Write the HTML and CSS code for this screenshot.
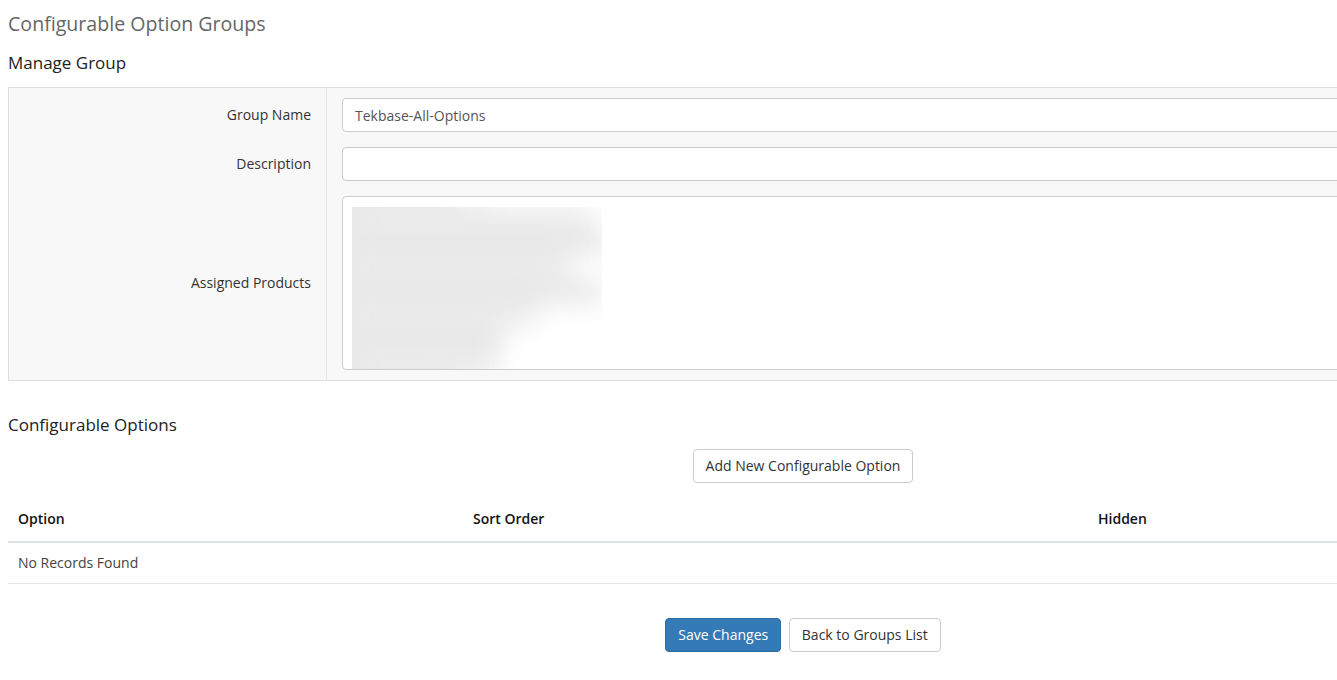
FILE: index.html
```html
<!DOCTYPE html>
<html lang="en">
<head>
  <meta charset="UTF-8" />
  <title>Configurable Option Groups</title>
  <link rel="stylesheet" href="styles.css">
</head>
<body>
  <div class="page">

    <h1 class="page-title">Configurable Option Groups</h1>

    <!-- Manage Group -->
    <h2 class="section-title">Manage Group</h2>
    <table class="form">
      <tr>
        <td class="fieldlabel">Group Name</td>
        <td class="fieldarea"><input type="text" class="form-control" value="Tekbase-All-Options" /></td>
      </tr>
      <tr>
        <td class="fieldlabel">Description</td>
        <td class="fieldarea"><input type="text" class="form-control" value="" /></td>
      </tr>
      <tr>
        <td class="fieldlabel">Assigned Products</td>
        <td class="fieldarea">
          <div class="multi-select">
            <div class="blur-clip">
              <div class="blur">
                <div class="bar" style="width: 240px"></div>
                <div class="bar" style="width: 255px"></div>
                <div class="bar" style="width: 215px"></div>
                <div class="bar" style="width: 250px"></div>
                <div class="bar" style="width: 185px"></div>
                <div class="bar" style="width: 150px"></div>
                <div class="bar" style="width: 140px"></div>
              </div>
            </div>
          </div>
        </td>
      </tr>
    </table>

    <!-- Configurable Options -->
    <h2 class="section-title options-title">Configurable Options</h2>
    <div class="center">
      <button type="button" class="btn">Add New Configurable Option</button>
    </div>

    <table class="datatable">
      <colgroup>
        <col style="width: 455px">
        <col style="width: 625px">
        <col>
      </colgroup>
      <thead>
        <tr>
          <th>Option</th>
          <th>Sort Order</th>
          <th>Hidden</th>
        </tr>
      </thead>
      <tbody>
        <tr>
          <td colspan="3">No Records Found</td>
        </tr>
      </tbody>
    </table>

    <div class="center actions">
      <button type="button" class="btn btn-primary">Save Changes</button>
      <button type="button" class="btn">Back to Groups List</button>
    </div>

  </div>
</body>
</html>
```

FILE: styles.css
```css
html, body {
  overflow: hidden;
}

body {
  margin: 0;
  font-family: "Open Sans", "Liberation Sans", sans-serif;
  font-size: 14px;
  line-height: 20px;
  color: #333;
  background: #fff;
}

.page {
  width: 1590px;
  padding: 0 8px;
}

.page-title {
  margin: 0;
  padding-top: 11px;
  font-size: 19.6px;
  font-weight: normal;
  line-height: 26px;
  color: #666;
}

.section-title {
  margin: 13px 0 11px;
  font-size: 17px;
  font-weight: normal;
  line-height: 26px;
  color: #222;
}

.options-title {
  margin-top: 31px;
  margin-bottom: 11px;
}

/* form table */
.form {
  width: 100%;
  border-collapse: collapse;
  border: 1px solid #ddd;
  background: #f8f8f8;
}

.form td {
  padding: 8px 15px 7px;
  vertical-align: middle;
}

.form tr:first-child td {
  padding-top: 10px;
}

.form tr:last-child td {
  padding-bottom: 10px;
}

.fieldlabel {
  width: 287px;
  text-align: right;
  color: #333;
  border-right: 1px solid #e6e6e6;
}

.form-control {
  display: block;
  box-sizing: border-box;
  width: 100%;
  height: 34px;
  padding: 6px 12px;
  font-family: inherit;
  font-size: 14px;
  color: #555;
  background: #fff;
  border: 1px solid #ccc;
  border-radius: 4px;
}

.multi-select {
  box-sizing: border-box;
  height: 174px;
  padding: 10px 0 0 9px;
  background: #fff;
  border: 1px solid #ccc;
  border-radius: 4px;
}

.blur-clip {
  width: 250px;
  height: 162px;
  overflow: hidden;
  background: linear-gradient(to right, #e7e7e7 0, #e9e9e9 90px, rgba(255,255,255,0) 160px);
}

.blur {
  margin: -30px 0 0 -30px;
  padding: 30px 0 30px 30px;
  display: flex;
  flex-direction: column;
  filter: blur(13px);
}

.bar {
  height: 24px;
  background: #e7e7e7;
}

.bar:nth-child(odd) {
  background: #ececec;
}

/* buttons */
.center {
  text-align: center;
}

.btn {
  display: inline-block;
  height: 34px;
  padding: 6px 12px;
  font-family: inherit;
  font-size: 14px;
  line-height: 20px;
  color: #333;
  background: #fff;
  border: 1px solid #ccc;
  border-radius: 4px;
}

.btn-primary {
  color: #fff;
  background: #337ab7;
  border-color: #2e6da4;
}

.actions {
  margin-top: 34px;
}

.actions .btn {
  margin: 0 2px;
}

/* data table */
.datatable {
  width: 100%;
  margin-top: 16px;
  border-collapse: collapse;
  table-layout: fixed;
}

.datatable th {
  padding: 10px 10px 12px;
  text-align: left;
  font-weight: 600;
  line-height: 20px;
  color: #111;
  border-bottom: 2px solid #dee2e6;
}

.datatable td {
  padding: 10px;
  line-height: 20px;
  color: #444;
  border-bottom: 1px solid #e5e5e5;
}
```
